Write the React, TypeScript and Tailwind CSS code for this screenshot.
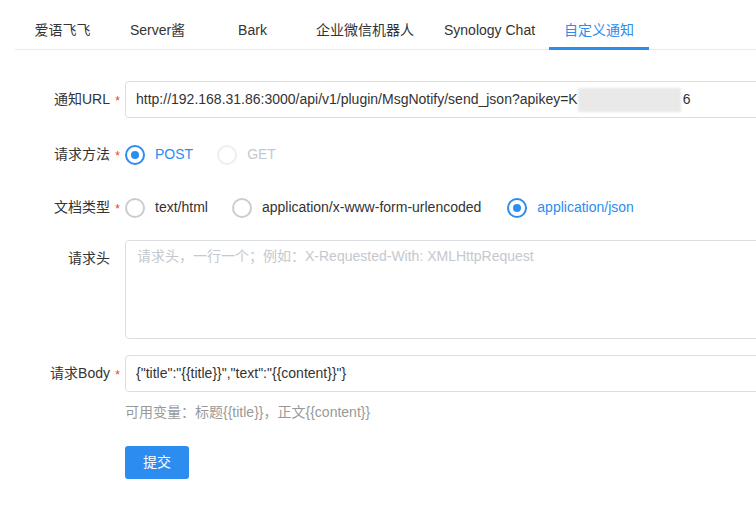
import { ReactNode } from 'react';

const tabs = [
  { t: '爱语飞飞', px: 'px-[16px]' },
  { t: 'Server酱', px: 'px-[16px]' },
  { t: 'Bark', px: 'px-[16px]' },
  { t: '企业微信机器人', px: 'px-[16px]' },
  { t: 'Synology Chat', px: 'px-[14px]' },
  { t: '自定义通知', px: 'px-[15px]' },
];

const FormItem = ({ label, required, top, children, className = '' }: { label: string; required?: boolean; top?: boolean; children: ReactNode; className?: string }) => (
  <div className={`flex ${top ? 'items-start' : 'items-center'} ${className}`}>
    <div className="w-[125px] shrink-0 flex justify-end items-center h-[37px] text-[14px] text-[#333]">
      <span>{label}</span>
      <span className="w-[15px] text-center text-[#ed4014] text-[12px] pt-[2px]">{required ? '*' : ''}</span>
    </div>
    {children}
  </div>
);

const Radio = ({ label, checked, disabled, className = '' }: { label: string; checked?: boolean; disabled?: boolean; className?: string }) => (
  <label className={`flex items-center mr-[24px] ${className}`}>
    <span
      className={`w-[20px] h-[20px] rounded-full border-2 flex items-center justify-center ${
        checked ? 'border-[#2d8cf0]' : disabled ? 'border-[#eceef1]' : 'border-[#c9ccd1]'
      }`}
    >
      {checked && <span className="w-[8px] h-[8px] rounded-full bg-[#2d8cf0]" />}
    </span>
    <span className={`ml-[10px] text-[14px] ${checked ? 'text-[#2d8cf0]' : disabled ? 'text-[#c5c8ce]' : 'text-[#333]'}`}>{label}</span>
  </label>
);

export default function App() {
  return (
    <div
      className="w-[756px] h-[521px] bg-white overflow-hidden"
      style={{ fontFamily: '"Liberation Sans", Arial, "Noto Sans CJK SC", sans-serif' }}
    >
      {/* tabs */}
      <div className="ml-[15px] h-[50px] flex border-b border-[#e8eaec]">
        {tabs.map((tab, i) => {
          const active = i === tabs.length - 1;
          return (
            <div
              key={tab.t}
              className={`relative min-w-[95px] ${tab.px} flex justify-center pt-[20px] leading-[20px] text-[14px] ${
                active ? 'text-[#2d8cf0]' : 'text-[#333]'
              }`}
            >
              {tab.t}
              {active && <span className="absolute left-0 right-0 bottom-[-1px] h-[3px] bg-[#2d8cf0]" />}
            </div>
          );
        })}
      </div>

      {/* form */}
      <div className="pt-[31px] flex flex-col">
        <FormItem label="通知URL" required className="mb-[18px]">
          <div className="w-[650px] h-[37px] shrink-0 border border-[#dcdee2] rounded-[4px] px-[10px] flex items-center text-[14px] text-[#333] whitespace-nowrap">
            <span>http://192.168.31.86:3000/api/v1/plugin/MsgNotify/send_json?apikey=K</span>
            <span className="inline-block w-[103px] h-[24px] bg-[#e9e9e9] blur-[1px]" />
            <span className="ml-[2px]">6</span>
          </div>
        </FormItem>

        <FormItem label="请求方法" required className="mb-[16px]">
          <div className="flex items-center h-[37px]">
            <Radio label="POST" checked />
            <Radio label="GET" disabled />
          </div>
        </FormItem>

        <FormItem label="文档类型" required className="mb-[14px]">
          <div className="flex items-center h-[37px]">
            <Radio label="text/html" />
            <Radio label="application/x-www-form-urlencoded" className="mr-[26px]" />
            <Radio label="application/json" checked />
          </div>
        </FormItem>

        <FormItem label="请求头" top className="mb-[16px]">
          <div className="w-[650px] h-[99px] shrink-0 border border-[#dcdee2] rounded-[4px] px-[11px] pt-[5px] text-[14px] leading-[20px] text-[#c5c8ce] whitespace-nowrap">
            请求头，一行一个；例如：X-Requested-With: XMLHttpRequest
          </div>
        </FormItem>

        <FormItem label="请求Body" required>
          <div className="w-[650px] h-[37px] shrink-0 border border-[#dcdee2] rounded-[4px] px-[10px] flex items-center text-[14px] text-[#333] whitespace-nowrap">
            {'{"title":"{{title}}","text":"{{content}}"}'}
          </div>
        </FormItem>

        <div className="ml-[125px] mt-[10px] text-[14px] leading-[20px] text-[#999]">可用变量：标题{'{{title}}'}，正文{'{{content}}'}</div>

        <div className="ml-[125px] mt-[24px]">
          <button className="w-[64px] h-[33px] bg-[#2d8cf0] text-white text-[14px] rounded-[3px]">提交</button>
        </div>
      </div>
    </div>
  );
}
